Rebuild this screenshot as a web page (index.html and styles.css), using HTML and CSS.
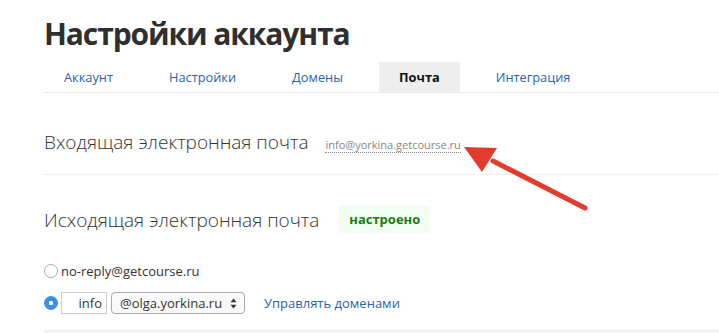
FILE: index.html
```html
<!DOCTYPE html>
<html lang="ru">
<head>
  <meta charset="UTF-8">
  <title>Настройки аккаунта</title>
  <link rel="stylesheet" href="styles.css">
</head>
<body>
  <div class="page">
    <h1 class="title">Настройки аккаунта</h1>

    <ul class="tabs">
      <li class="tab"><a href="#">Аккаунт</a></li>
      <li class="tab"><a href="#">Настройки</a></li>
      <li class="tab"><a href="#">Домены</a></li>
      <li class="tab active"><a href="#">Почта</a></li>
      <li class="tab"><a href="#">Интеграция</a></li>
    </ul>

    <div class="section incoming">
      <h2 class="section-title">Входящая электронная почта</h2>
      <span class="mail-addr">info@yorkina.getcourse.ru</span>
    </div>

    <div class="section outgoing">
      <div class="outgoing-head">
        <h2 class="section-title">Исходящая электронная почта</h2>
        <span class="badge">настроено</span>
      </div>

      <label class="option">
        <span class="radio"></span>
        no-reply@getcourse.ru
      </label>

      <div class="option">
        <span class="radio checked"></span>
        <input class="mailbox" type="text" value="info">
        <div class="domain-select">
          <span>@olga.yorkina.ru</span>
          <svg class="arrows" width="7" height="11" viewBox="0 0 7 11">
            <path d="M3.5 0.5 L6.5 4.3 H0.5 Z M3.5 10.5 L6.5 6.7 H0.5 Z" fill="#333"/>
          </svg>
        </div>
        <a class="manage-link" href="#">Управлять доменами</a>
      </div>
    </div>

    <div class="footer-bar"></div>
  </div>

  <!-- red pointer drawn over the page -->
  <svg class="pointer" width="140" height="80" viewBox="0 0 140 80">
    <line x1="32" y1="16" x2="124" y2="63" stroke="#e43b2f" stroke-width="5" stroke-linecap="round"/>
    <polygon points="3,2 36,3 21,27" fill="#e43b2f"/>
  </svg>
</body>
</html>
```

FILE: styles.css
```css
body {
  margin: 0;
  font-family: "Open Sans", "Noto Sans", sans-serif;
  color: #333;
  background: #fff;
}
.page {
  padding: 14px 0 0 44px;
}
.title {
  margin: 0;
  font-size: 30px;
  font-weight: 700;
  letter-spacing: -1.1px;
  color: #2f2f2f;
  line-height: 40px;
}
.tabs {
  list-style: none;
  margin: 8px 0 0;
  padding: 0;
  display: flex;
  gap: 16px;
  border-bottom: 1px solid #e9e9e9;
}
.tab a {
  display: block;
  padding: 0 20px;
  line-height: 30px;
  font-size: 12.8px;
  color: #2a63a8;
  text-decoration: none;
}
.tab.active a {
  background: #eeeeee;
  color: #111;
  font-weight: 700;
}
.section-title {
  margin: 0;
  font-size: 19px;
  font-weight: 300;
  line-height: 26px;
  color: #333;
}
.incoming {
  display: flex;
  align-items: baseline;
  gap: 17px;
  height: 82px;
  padding-top: 36px;
  box-sizing: border-box;
  border-bottom: 1px solid #efefef;
}
.mail-addr {
  font-size: 11px;
  line-height: 14px;
  color: #888;
  border-bottom: 1px dotted #888;
}
.outgoing-head {
  display: flex;
  align-items: center;
  gap: 20px;
  margin-top: 31px;
}
.badge {
  background: #f2fdf2;
  color: #1b7a14;
  font-size: 13px;
  font-weight: 700;
  padding: 5px 10px;
  line-height: 17px;
}
.option {
  display: flex;
  align-items: center;
  gap: 3px;
  font-size: 13px;
  color: #333;
}
label.option {
  margin-top: 29px;
}
div.option {
  margin-top: 12px;
}
.radio {
  width: 12px;
  height: 12px;
  border: 1px solid #aaa;
  border-radius: 50%;
  box-sizing: content-box;
  background: #fff;
}
.radio.checked {
  border-color: #3a8ee6;
  background: radial-gradient(circle, #fff 0 2px, #3a8ee6 2.5px);
}
.mailbox {
  width: 46px;
  height: 22px;
  box-sizing: border-box;
  border: 1px solid #ccc;
  font: inherit;
  font-size: 13px;
  text-align: right;
  padding: 0 4px;
  color: #333;
}
.domain-select {
  margin-left: 1px;
  width: 134px;
  height: 22px;
  box-sizing: border-box;
  border: 1px solid #aaa;
  border-radius: 4px;
  display: flex;
  align-items: center;
  justify-content: space-between;
  padding: 0 7px 0 8px;
  background: #fafafa;
}
.manage-link {
  margin-left: 16px;
  color: #2a63a8;
  text-decoration: none;
}
.footer-bar {
  margin-top: 15px;
  height: 5px;
  background: #f3f3f3;
}
.pointer {
  position: absolute;
  left: 461px;
  top: 145px;
}
```
